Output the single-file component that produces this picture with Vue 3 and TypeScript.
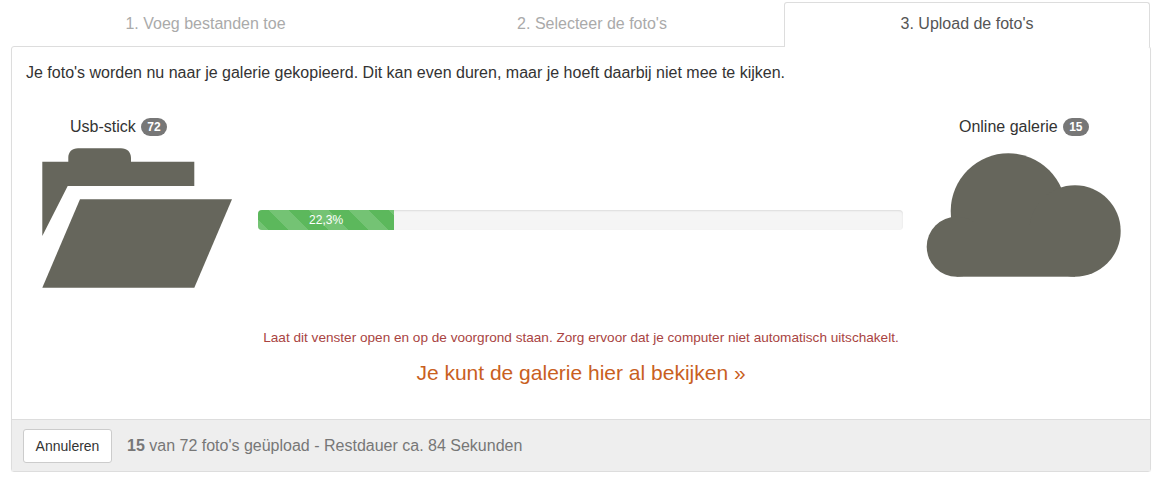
<template>
  <div class="wizard">
    <div class="tabs">
      <div
        v-for="(tab, i) in tabs"
        :key="tab"
        :class="['tab', { active: i === 2 }]"
      >
        {{ tab }}
      </div>
    </div>

    <div class="panel">
      <div class="panel-body">
        <p class="intro">
          Je foto's worden nu naar je galerie gekopieerd. Dit kan even duren, maar je hoeft daarbij niet mee te kijken.
        </p>

        <div class="transfer">
          <div class="side side-left">
            <div class="side-label">Usb-stick <span class="badge">72</span></div>
            <svg class="folder" width="190" height="140" viewBox="42 148 190 140">
              <path
                fill="#66665c"
                d="M42.3 161.7H68.3V158C68.3 152 72 148.3 78 148.3H121C127 148.3 131 152 131 158V161.7H194.3V186H67.7L42.3 236Z"
              />
              <path fill="#66665c" d="M80 199.3H232L194.3 287.7H42.3Z" />
            </svg>
          </div>

          <div class="progress">
            <div class="progress-bar" :style="{ width: percent + '%' }">22,3%</div>
          </div>

          <div class="side side-right">
            <div class="side-label">Online galerie <span class="badge">15</span></div>
            <svg class="cloud" width="196" height="124" viewBox="926 153 196 124" fill="#66665c">
              <circle cx="1008.4" cy="211" r="57.7" />
              <circle cx="1075" cy="231" r="45.7" />
              <circle cx="956.7" cy="246.7" r="30" />
              <rect x="956.7" y="225" width="118.3" height="51.7" />
            </svg>
          </div>
        </div>

        <p class="warning">
          Laat dit venster open en op de voorgrond staan. Zorg ervoor dat je computer niet automatisch uitschakelt.
        </p>
        <a class="gallery-link" href="#">Je kunt de galerie hier al bekijken »</a>
      </div>

      <div class="panel-footer">
        <button class="btn">Annuleren</button>
        <span class="status"><b>15</b> van 72 foto's geüpload - Restdauer ca. 84 Sekunden</span>
      </div>
    </div>
  </div>
</template>

<script setup lang="ts">
const tabs: string[] = ['1. Voeg bestanden toe', '2. Selecteer de foto\'s', '3. Upload de foto\'s']
const percent = 21.1
</script>

<style>
body {
  background: #fff;
}
</style>

<style scoped>
.wizard {
  width: 1140px;
  margin-left: 11px;
  padding-top: 2px;
  font-family: "Liberation Sans", Arial, sans-serif;
  font-size: 16px;
  color: #333;
}

.tabs {
  display: grid;
  grid-template-columns: 389px 384px 366px;
  height: 45px;
  margin-bottom: -1px;
  position: relative;
  z-index: 1;
}

.tab {
  display: flex;
  align-items: center;
  justify-content: center;
  font-size: 16px;
  color: #aaa;
  padding-bottom: 2px;
  box-sizing: border-box;
}

.tab.active {
  color: #555;
  background: #fff;
  border: 1px solid #ddd;
  border-bottom: none;
  border-radius: 3px 3px 0 0;
}

.panel {
  border: 1px solid #ddd;
  border-radius: 3px;
  box-shadow: 0 1px 1px rgba(0, 0, 0, 0.05);
}

.panel-body {
  padding: 17px 14px 0;
  height: 372px;
  box-sizing: border-box;
}

.intro {
  margin: 0;
  font-size: 16px;
  line-height: 18px;
}

.transfer {
  display: flex;
  align-items: flex-start;
  margin-top: 36px;
  height: 180px;
}

.side-left {
  width: 190px;
  margin-left: 16px;
}

.side-right {
  width: 196px;
  margin-left: 23px;
}

.side-label {
  display: flex;
  align-items: center;
  justify-content: center;
  gap: 5px;
  font-size: 16px;
  line-height: 18px;
  height: 18px;
}

.side-left .side-label {
  margin-left: -37px;
}

.badge {
  background: #777;
  color: #fff;
  font-size: 12px;
  font-weight: bold;
  line-height: 12px;
  padding: 3px 6.5px;
  border-radius: 10px;
}

.folder {
  display: block;
  margin-top: 12px;
}

.cloud {
  display: block;
  margin-top: 17px;
}

.progress {
  width: 645px;
  height: 20px;
  margin-left: 26px;
  margin-top: 92px;
  background: #f5f5f5;
  border-radius: 4px;
  box-shadow: inset 0 1px 2px rgba(0, 0, 0, 0.1);
  overflow: hidden;
}

.progress-bar {
  height: 100%;
  background-color: #5cb85c;
  background-image: linear-gradient(
    45deg,
    rgba(255, 255, 255, 0.15) 25%,
    transparent 25%,
    transparent 50%,
    rgba(255, 255, 255, 0.15) 50%,
    rgba(255, 255, 255, 0.15) 75%,
    transparent 75%,
    transparent
  );
  background-size: 40px 40px;
  background-position: 11px 0;
  color: #fff;
  font-size: 12px;
  line-height: 20px;
  text-align: center;
}

.warning {
  margin: 31px 0 0;
  text-align: center;
  font-size: 13.6px;
  line-height: 18px;
  color: #a94442;
}

.gallery-link {
  display: block;
  margin-top: 14px;
  text-align: center;
  font-size: 21px;
  line-height: 24px;
  color: #c9601e;
  text-decoration: none;
}

.panel-footer {
  display: flex;
  align-items: center;
  gap: 15px;
  height: 52px;
  padding: 0 11px;
  box-sizing: border-box;
  background: #eee;
  border-top: 1px solid #ddd;
}

.btn {
  width: 89px;
  height: 34px;
  background: #fff;
  border: 1px solid #ccc;
  border-radius: 3px;
  font-family: inherit;
  font-size: 14px;
  color: #333;
}

.status {
  font-size: 16px;
  color: #777;
}
</style>
